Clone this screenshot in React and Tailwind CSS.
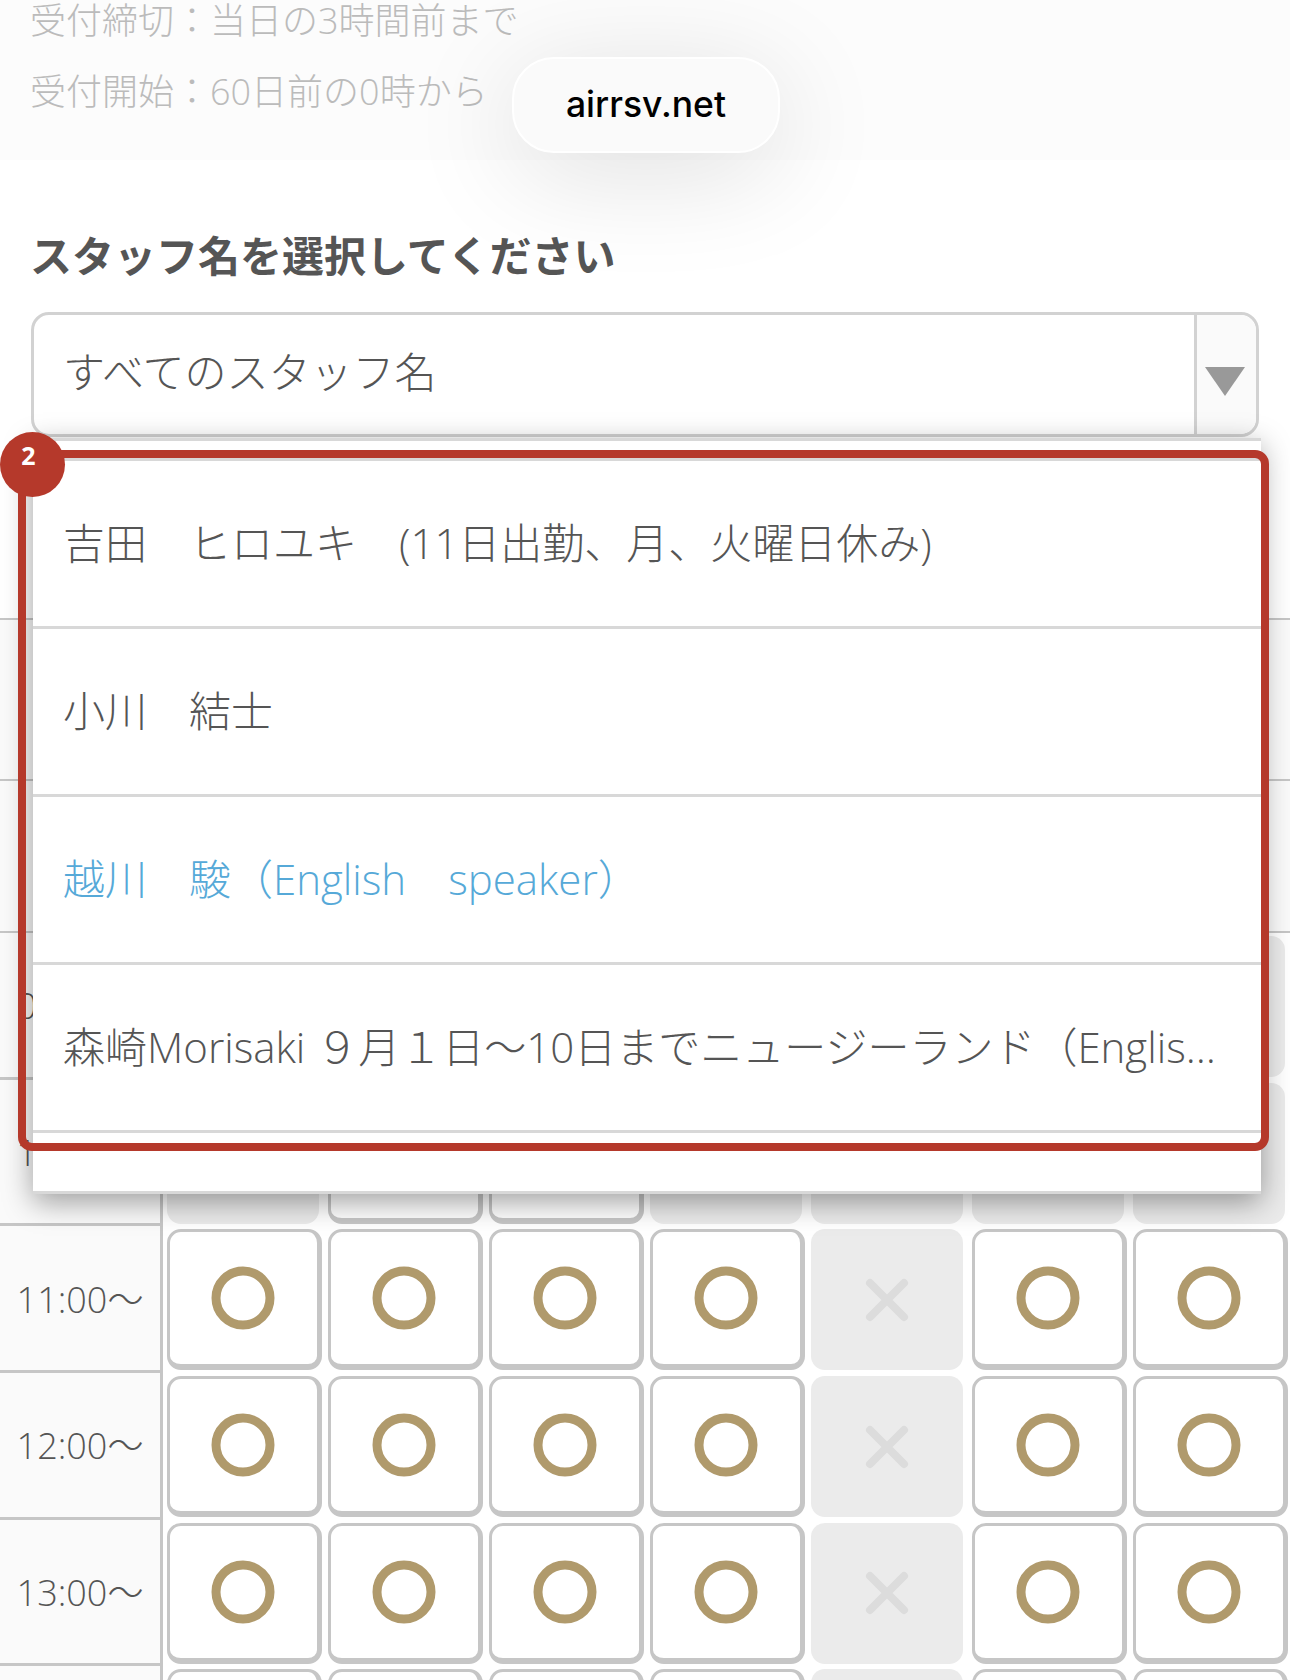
const BODY_FONT = "font-['Open_Sans','Noto_Sans_CJK_JP',sans-serif]";

const STAFF = [
  { name: "吉田　ヒロユキ　(11日出勤、月、火曜日休み)" },
  { name: "小川　結士" },
  { name: "越川　駿（English　speaker）", active: true },
  { name: "森崎Morisaki ９月１日〜10日までニュージーランド（English speaker）" },
  { name: "" },
];

const D = "x";
const O = "o";
const ROWS = [
  { time: "09:00～", cells: [D, D, D, D, D, D, D] },
  { time: "10:00～", cells: [D, O, O, D, D, D, D] },
  { time: "11:00～", cells: [O, O, O, O, D, O, O] },
  { time: "12:00～", cells: [O, O, O, O, D, O, O] },
  { time: "13:00～", cells: [O, O, O, O, D, O, O] },
  { time: "14:00～", cells: [O, O, O, O, D, O, O] },
];

function Cell({ type }) {
  if (type === O) {
    return (
      <button
        type="button"
        className="w-[155px] h-[141px] shrink-0 flex items-center justify-center pr-[2px] bg-white rounded-[14px] border-t-[3px] border-l-[3px] border-r-[5px] border-b-[6px] border-[#c6c6c6]"
      >
        <svg width="64" height="64" viewBox="0 0 64 64" fill="none">
          <circle cx="32" cy="32" r="27" stroke="#b09a6c" strokeWidth="9" />
        </svg>
      </button>
    );
  }
  return (
    <div className="w-[152px] h-[141px] mr-[3px] shrink-0 flex items-center justify-center bg-[#ebebeb] rounded-[14px]">
      <svg width="44" height="44" viewBox="0 0 44 44" fill="none">
        <path
          d="M5 5L39 39M39 5L5 39"
          stroke="#dcdcdc"
          strokeWidth="8"
          strokeLinecap="round"
        />
      </svg>
    </div>
  );
}

function TimeRow({ time, cells }) {
  return (
    <div className="flex h-[146.7px]">
      <div className="w-[163px] shrink-0 flex items-center justify-center pt-[3px] bg-[#fafafa] border-r-[3px] border-b-[3px] border-[#c6c6c6] text-[36px] font-light text-[#555]">
        {time}
      </div>
      <div className="flex gap-[6px] pl-[4px] pt-[3px]">
        {cells.map((type, i) => (
          <Cell key={i} type={type} />
        ))}
      </div>
    </div>
  );
}

export default function App() {
  return (
    <div className={`relative w-full h-[1680px] overflow-hidden bg-white ${BODY_FONT}`}>
      {/* info block, washed out behind the url pill */}
      <div className="h-[160px] overflow-hidden bg-[#fcfcfc] pl-[30px] text-[36px] leading-[71px] text-[#bbb] font-light">
        <p className="-mt-[15px]">受付締切：当日の3時間前まで</p>
        <p>受付開始：60日前の0時から</p>
      </div>

      <h2 className="mt-[68px] pl-[30px] text-[42px] leading-[56px] font-bold text-[#555]">
        スタッフ名を選択してください
      </h2>

      <div className="mx-[31px] mt-[28px] h-[125px] flex rounded-[18px] border-[3px] border-[#d2d2d2] bg-white text-[42px] text-[#555] font-light">
        <div className="flex-1 flex items-center pl-[29px] pb-[6px]">すべてのスタッフ名</div>
        <div className="w-[62px] flex items-center justify-center pr-[3px] border-l-[3px] border-[#d2d2d2] bg-[#fafafa] rounded-r-[16px]">
          <svg width="40" height="29" viewBox="0 0 40 29" className="mt-[14px]">
            <path d="M0 0H40L20 29Z" fill="#999" />
          </svg>
        </div>
      </div>

      {/* table, mostly behind the dropdown */}
      <div className="mt-[181px]">
        <div className="h-[161px] bg-[#fafafa] border-t-[2px] border-[#c6c6c6]" />
        <div className="h-[154px] bg-[#fafafa] border-t-[2px] border-b-[2px] border-[#c6c6c6]" />
        {ROWS.map((row) => (
          <TimeRow key={row.time} time={row.time} cells={row.cells} />
        ))}
      </div>

      {/* dropdown */}
      <ul className="absolute left-[33px] top-[438px] w-[1228px] h-[756px] overflow-hidden bg-white border-y-[3px] border-[#d8d8d8] pt-[17px] shadow-[0_8px_28px_rgba(0,0,0,0.38)] text-[42px] font-light">
        {STAFF.map((s, i) => (
          <li
            key={i}
            className={`h-[168px] flex items-center border-t-[3px] border-[#d8d8d8] pl-[30px] pr-[26px] pb-[3px] ${
              s.active ? "text-[#56a9d8]" : "text-[#555]"
            }`}
          >
            <span className="truncate">{s.name}</span>
          </li>
        ))}
      </ul>

      {/* annotation */}
      <div className="absolute left-[18px] top-[450px] w-[1251px] h-[701px] rounded-[14px] border-[8px] border-[#b5392b]" />
      <div className="absolute left-0 top-[432px] w-[65px] h-[65px] rounded-full bg-[#b5392b] flex items-center justify-center pb-[18px] pr-[8px] text-[25px] font-bold text-white font-['Noto_Sans',sans-serif]">
        2
      </div>

      {/* url pill */}
      <div className="absolute left-[512px] top-[57px] w-[268px] h-[96px] flex items-center justify-center rounded-[42px] border-[2px] border-white bg-[#fafafa] shadow-[0_20px_110px_rgba(0,0,0,0.13)] text-[35.5px] font-medium text-black font-['Inter',sans-serif]">
        airrsv.net
      </div>
    </div>
  );
}
